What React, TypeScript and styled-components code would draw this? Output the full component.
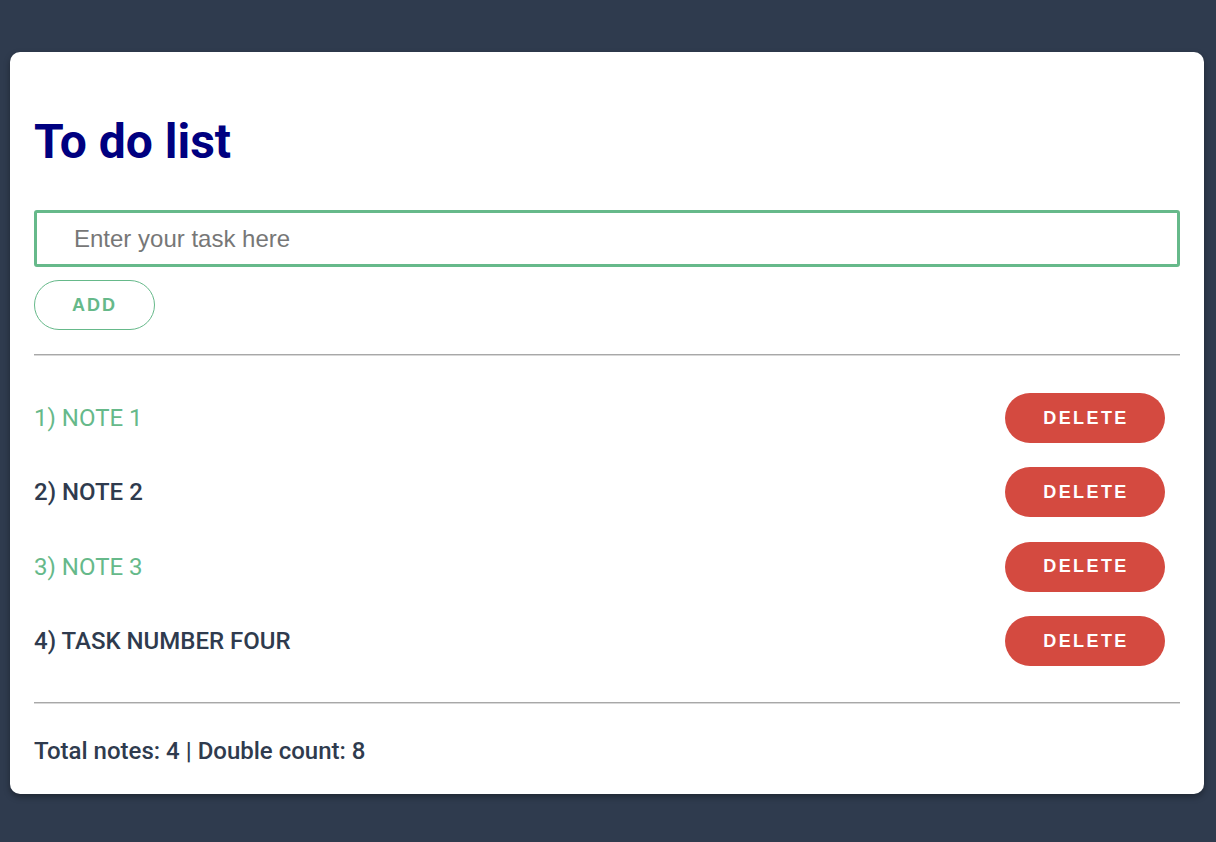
import React from "react";
import styled, { createGlobalStyle } from "styled-components";

const Global = createGlobalStyle`
  html, body { margin: 0; padding: 0; background: #2f3b4e; }
  body { font-family: Roboto, "Noto Sans", sans-serif; }
  * { box-sizing: border-box; }
`;

const Page = styled.div`
  min-height: 842px;
  padding: 52px 12px 0 10px;
`;

const Card = styled.div`
  background: #ffffff;
  border-radius: 10px;
  padding: 62px 24px 29px 24px;
  box-shadow: 0 3px 6px rgba(0, 0, 0, 0.35);
`;

const Title = styled.h1`
  margin: 0 0 40px 0;
  font-family: Roboto, sans-serif;
  font-weight: 700;
  font-size: 48px;
  line-height: 56px;
  color: #000080;
`;

const Input = styled.input`
  display: block;
  width: 100%;
  height: 57px;
  border: 3px solid #66b98a;
  border-radius: 3px;
  padding: 0 37px;
  font-family: "Liberation Sans", Arial, sans-serif;
  font-size: 24px;
  color: #333;
  outline: none;
  &::placeholder { color: #777777; }
`;

const AddButton = styled.button`
  display: block;
  margin-top: 13px;
  width: 121px;
  height: 50px;
  border: 1px solid #66b98a;
  border-radius: 25px;
  background: #fff;
  color: #66b98a;
  font-family: "Liberation Sans", Arial, sans-serif;
  font-weight: 700;
  font-size: 18px;
  letter-spacing: 2px;
  padding: 0 0 0 0;
  cursor: pointer;
`;

const Divider = styled.hr<{ $top: number }>`
  margin: ${(p) => p.$top}px 0 0 0;
  border: none;
  border-top: 1px solid #a8a8a8;
  border-bottom: 1px solid #d8d8d8;
  height: 0;
`;

const List = styled.ul`
  list-style: none;
  margin: 0;
  padding: 25px 15px 24px 0;
`;

const Row = styled.li`
  display: flex;
  align-items: center;
  justify-content: space-between;
  height: 74.3px;
`;

const Label = styled.span<{ $odd: boolean }>`
  font-family: Roboto, sans-serif;
  font-size: 24px;
  font-weight: ${(p) => (p.$odd ? 400 : 500)};
  color: ${(p) => (p.$odd ? "#66b98a" : "#2f3b4e")};
`;

const DeleteButton = styled.button`
  width: 160px;
  height: 50px;
  border: none;
  border-radius: 25px;
  background: #d44a40;
  color: #ffffff;
  font-family: "Liberation Sans", Arial, sans-serif;
  font-weight: 700;
  font-size: 18px;
  letter-spacing: 2.4px;
  padding: 0 0 0 2px;
  cursor: pointer;
`;

const Footer = styled.div`
  margin-top: 33px;
  font-family: Roboto, sans-serif;
  font-weight: 500;
  font-size: 24px;
  color: #2f3b4e;
`;

const notes = ["NOTE 1", "NOTE 2", "NOTE 3", "TASK NUMBER FOUR"];

export default function App() {
  return (
    <>
      <Global />
      <Page>
        <Card>
          <Title>To do list</Title>
          <Input placeholder="Enter your task here" />
          <AddButton>ADD</AddButton>
          <Divider $top={24} />
          <List>
            {notes.map((n, i) => (
              <Row key={i}>
                <Label $odd={i % 2 === 0}>
                  {i + 1}) {n}
                </Label>
                <DeleteButton>DELETE</DeleteButton>
              </Row>
            ))}
          </List>
          <Divider $top={0} />
          <Footer>
            Total notes: {notes.length} | Double count: {notes.length * 2}
          </Footer>
        </Card>
      </Page>
    </>
  );
}
